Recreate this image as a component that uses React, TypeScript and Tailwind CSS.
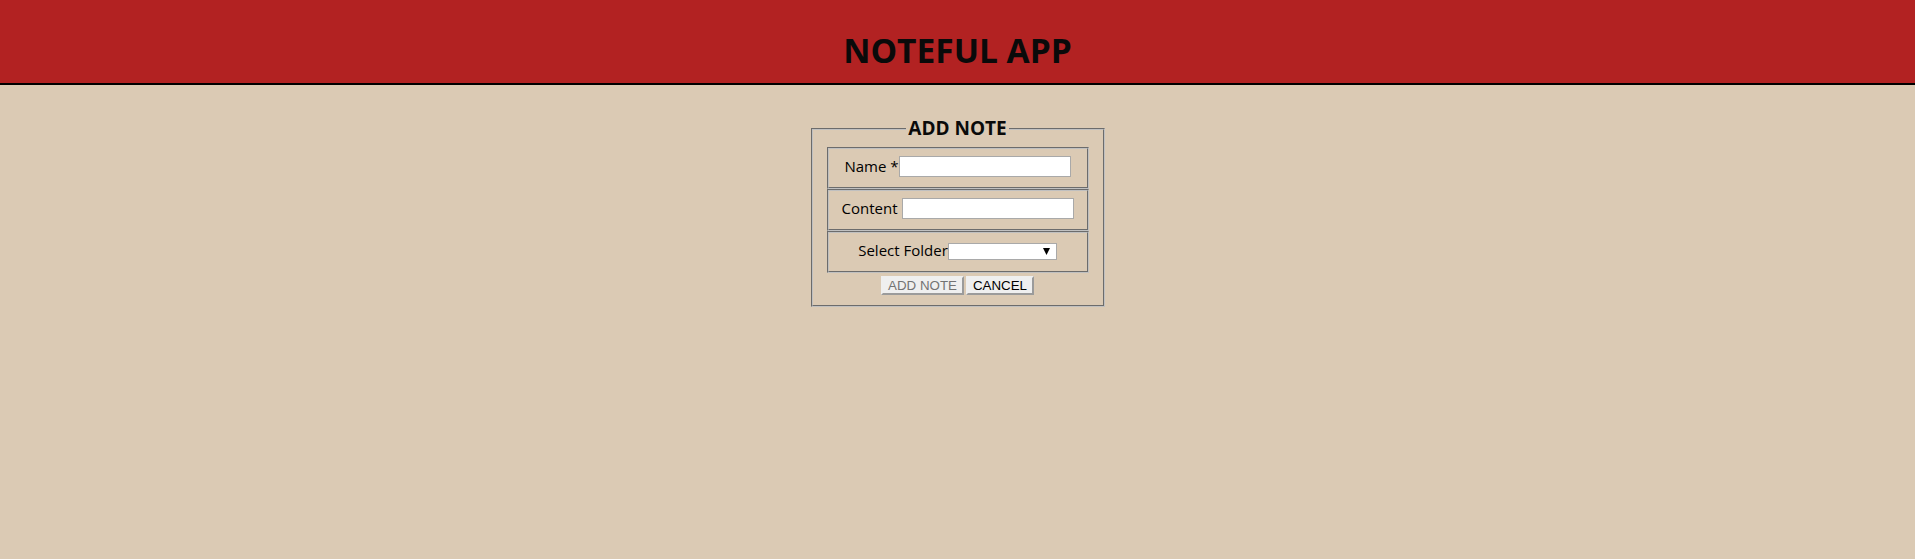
export default function App() {
  return (
    <div className="min-h-screen w-full bg-[#dbcab4] font-['Open_Sans','Noto_Sans',sans-serif] text-black">
      <header className="h-[85px] border-b-2 border-black bg-[#b22222] pt-[30px]">
        <h1 className="text-center text-[33.5px] font-bold leading-[40px] text-[#0a0a0a]">NOTEFUL APP</h1>
      </header>
      <main className="flex justify-center pt-[31px]">
        <form onSubmit={(e) => e.preventDefault()}>
          <fieldset className="w-[294px] [border:2px_groove_#c0c0c0] px-[12px] pt-[6px] pb-[10px]">
            <legend className="mx-auto px-[2px] text-[19px] font-bold leading-[25px] text-[#0a0a0a]">ADD NOTE</legend>
            <fieldset className="mx-[2px] [border:2px_groove_#c0c0c0] px-[12px] pt-[6px] pb-[10px]">
              <div className="flex h-[22px] items-end justify-center">
                <label className="whitespace-nowrap text-[15px] leading-[22px]">Name *</label>
                <input
                  type="text"
                  className="h-[21px] w-[172px] border border-[#a9a9a9] bg-white outline-none"
                />
              </div>
            </fieldset>
            <fieldset className="mx-[2px] [border:2px_groove_#c0c0c0] px-[12px] pt-[6px] pb-[10px]">
              <div className="flex h-[22px] items-end justify-center">
                <label className="whitespace-nowrap text-[15px] leading-[22px]">Content</label>
                <input
                  type="text"
                  className="ml-[4px] h-[21px] w-[172px] border border-[#a9a9a9] bg-white outline-none"
                />
              </div>
            </fieldset>
            <fieldset className="mx-[2px] [border:2px_groove_#c0c0c0] px-[12px] pt-[6px] pb-[10px]">
              <div className="flex h-[22px] items-end justify-center">
                <label className="whitespace-nowrap text-[15px] leading-[22px]">Select Folder</label>
                <div className="mb-[1px] flex h-[17px] w-[109px] items-center justify-end border border-[#a9a9a9] bg-white pr-[6px]">
                  <svg width="7" height="7" viewBox="0 0 7 7">
                    <polygon points="0,0 7,0 3.5,7" fill="#000" />
                  </svg>
                </div>
              </div>
            </fieldset>
            <div className="mt-[3px] flex justify-center gap-[2px]">
              <button
                type="submit"
                disabled
                className="h-[19px] w-[83px] bg-[#efefef] [border:2px_outset_#efefef] p-0 font-['Liberation_Sans',Arial,sans-serif] text-[13.33px] leading-[15px] text-[#737373]"
              >
                ADD NOTE
              </button>
              <button
                type="button"
                className="h-[19px] w-[68px] bg-[#efefef] [border:2px_outset_#efefef] p-0 font-['Liberation_Sans',Arial,sans-serif] text-[13.33px] leading-[15px] text-black"
              >
                CANCEL
              </button>
            </div>
          </fieldset>
        </form>
      </main>
    </div>
  );
}
